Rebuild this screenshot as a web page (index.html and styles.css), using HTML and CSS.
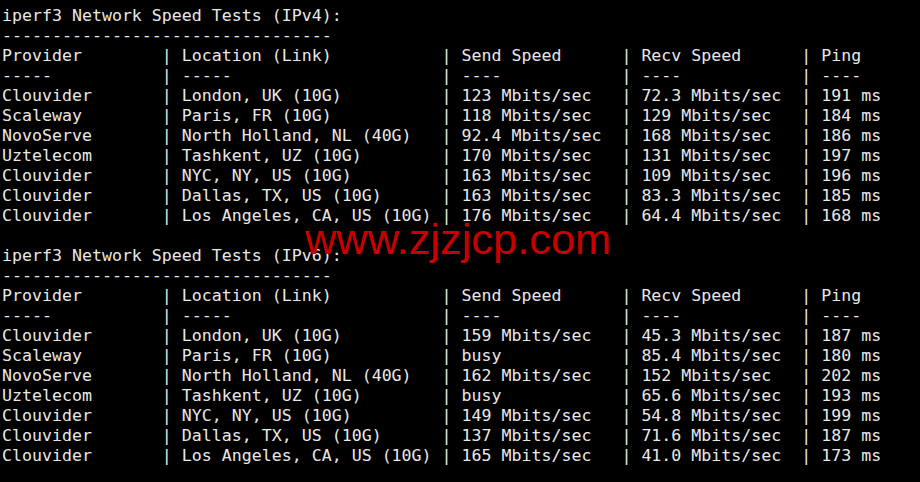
FILE: index.html
```html
<!DOCTYPE html>
<html>
<head>
<meta charset="utf-8">
<link rel="stylesheet" href="styles.css">
</head>
<body>
<div class="term">
<pre class="out">iperf3 Network Speed Tests (IPv4):
<span class="rule">------------------------------------------------------------</span>
Provider        | Location (Link)           | Send Speed      | Recv Speed      | Ping
-----           | -----                     | ----            | ----            | ----
Clouvider       | London, UK (10G)          | 123 Mbits/sec   | 72.3 Mbits/sec  | 191 ms
Scaleway        | Paris, FR (10G)           | 118 Mbits/sec   | 129 Mbits/sec   | 184 ms
NovoServe       | North Holland, NL (40G)   | 92.4 Mbits/sec  | 168 Mbits/sec   | 186 ms
Uztelecom       | Tashkent, UZ (10G)        | 170 Mbits/sec   | 131 Mbits/sec   | 197 ms
Clouvider       | NYC, NY, US (10G)         | 163 Mbits/sec   | 109 Mbits/sec   | 196 ms
Clouvider       | Dallas, TX, US (10G)      | 163 Mbits/sec   | 83.3 Mbits/sec  | 185 ms
Clouvider       | Los Angeles, CA, US (10G) | 176 Mbits/sec   | 64.4 Mbits/sec  | 168 ms

iperf3 Network Speed Tests (IPv6):
<span class="rule">------------------------------------------------------------</span>
Provider        | Location (Link)           | Send Speed      | Recv Speed      | Ping
-----           | -----                     | ----            | ----            | ----
Clouvider       | London, UK (10G)          | 159 Mbits/sec   | 45.3 Mbits/sec  | 187 ms
Scaleway        | Paris, FR (10G)           | busy            | 85.4 Mbits/sec  | 180 ms
NovoServe       | North Holland, NL (40G)   | 162 Mbits/sec   | 152 Mbits/sec   | 202 ms
Uztelecom       | Tashkent, UZ (10G)        | busy            | 65.6 Mbits/sec  | 193 ms
Clouvider       | NYC, NY, US (10G)         | 149 Mbits/sec   | 54.8 Mbits/sec  | 199 ms
Clouvider       | Dallas, TX, US (10G)      | 137 Mbits/sec   | 71.6 Mbits/sec  | 187 ms
Clouvider       | Los Angeles, CA, US (10G) | 165 Mbits/sec   | 41.0 Mbits/sec  | 173 ms</pre>
<div class="mark">www.zjzjcp.com</div>
</div>
</body>
</html>
```
FILE: styles.css
```css
html, body {
  margin: 0;
  padding: 0;
  background: #000;
}
.term {
  position: relative;
  width: 920px;
  height: 482px;
  background: #000;
  overflow: hidden;
}
.out {
  margin: 0;
  padding: 6px 0 0 2px;
  font-family: "DejaVu Sans Mono", monospace;
  font-size: 16.6px;
  line-height: 20px;
  color: #e8e8e8;
  white-space: pre;
}
.rule {
  display: inline-block;
  width: 33ch;
  height: 20px;
  overflow: hidden;
  vertical-align: top;
}
.mark {
  position: absolute;
  left: 305px;
  top: 215px;
  font-family: "Liberation Sans", Arial, sans-serif;
  font-size: 43.4px;
  line-height: 48px;
  color: #c80000;
}
```
